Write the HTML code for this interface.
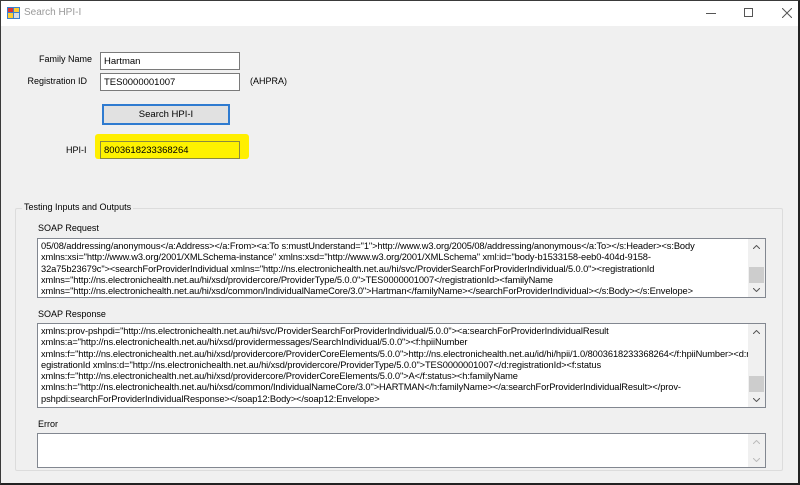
<!DOCTYPE html>
<html><head><meta charset="utf-8"><style>
*{box-sizing:border-box;margin:0;padding:0}
body{width:800px;height:485px;overflow:hidden;background:#f0f0f0;font-family:"Liberation Sans",sans-serif;font-size:9px;color:#000;position:relative}
.frame{position:absolute;inset:0;border:1px solid #3a3a3a;border-right:2px solid #222;border-bottom:2px solid #222}
.title{position:absolute;left:0;top:0;width:800px;height:26px;background:#fff}
.abs{position:absolute;white-space:nowrap}
.r{text-align:right}
.tb{position:absolute;background:#fff;border:1px solid #7a7a7a;height:18px;padding:3px 0 0 3px;font-size:9.5px}
.ta{position:absolute;background:#fff;border:1px solid #828790;font-size:9.3px;line-height:11.3px;padding:2px 0 0 3px;overflow:hidden;letter-spacing:-0.1px}
.ta div{white-space:nowrap}
.sb{position:absolute;right:0;top:0;bottom:0;width:17px;background:#f0f0f0}
.sb .th{position:absolute;left:1px;right:1px;background:#cdcdcd}
.sb svg{position:absolute;left:5px}
</style></head><body>
<div class="title">
 <svg class="abs" style="left:7px;top:7px" width="13" height="12"><rect x="0" y="0" width="13" height="12" fill="#3a7fcf"/><rect x="1" y="1" width="5" height="4" fill="#d33"/><rect x="7" y="1" width="5" height="4" fill="#fc3"/><rect x="1" y="6" width="5" height="5" fill="#fc3"/><rect x="7" y="6" width="5" height="5" fill="#ddd"/></svg>
 <div class="abs" style="left:24px;top:7px;font-size:10px;color:#999">Search HPI-I</div>
 <div class="abs" style="left:706px;top:13px;width:10px;height:1px;background:#555"></div>
 <div class="abs" style="left:744px;top:8px;width:9px;height:9px;border:1px solid #555"></div>
 <svg class="abs" style="left:782px;top:8px" width="10" height="10"><path d="M0 0L10 10M10 0L0 10" stroke="#555" stroke-width="1"/></svg>
</div>
<div class="abs r" style="left:20px;width:72px;top:54px">Family Name</div>
<div class="tb" style="left:100px;top:52px;width:140px">Hartman</div>
<div class="abs r" style="left:10px;width:77px;top:76px">Registration ID</div>
<div class="tb" style="left:100px;top:73px;width:140px">TES0000001007</div>
<div class="abs" style="left:250px;top:76px">(AHPRA)</div>
<div class="abs" style="left:102px;top:104px;width:128px;height:21px;background:#e1e1e1;border:2px solid #2f7bd0;text-align:center;line-height:17px;font-size:9.5px">Search HPI-I</div>
<div class="abs" style="left:95px;top:134px;width:154px;height:25px;background:#ffef00;border-radius:3px"></div>
<div class="abs" style="left:66px;top:145px">HPI-I</div>
<div class="tb" style="left:100px;top:141px;width:140px;background:#fef200;border-color:#8a8a40">8003618233368264</div>
<div class="abs" style="left:15px;top:208px;width:768px;height:263px;border:1px solid #dcdcdc;border-radius:2px"></div>
<div class="abs" style="left:22px;top:202px;background:#f0f0f0;padding:0 2px">Testing Inputs and Outputs</div>
<div class="abs" style="left:38px;top:223px">SOAP Request</div>
<div class="ta" style="left:37px;top:238px;width:729px;height:60px">
<div>05/08/addressing/anonymous&lt;/a:Address&gt;&lt;/a:From&gt;&lt;a:To s:mustUnderstand="1"&gt;http://www.w3.org/2005/08/addressing/anonymous&lt;/a:To&gt;&lt;/s:Header&gt;&lt;s:Body</div>
<div>xmlns:xsi="http://www.w3.org/2001/XMLSchema-instance" xmlns:xsd="http://www.w3.org/2001/XMLSchema" xml:id="body-b1533158-eeb0-404d-9158-</div>
<div>32a75b23679c"&gt;&lt;searchForProviderIndividual xmlns="http://ns.electronichealth.net.au/hi/svc/ProviderSearchForProviderIndividual/5.0.0"&gt;&lt;registrationId</div>
<div>xmlns="http://ns.electronichealth.net.au/hi/xsd/providercore/ProviderType/5.0.0"&gt;TES0000001007&lt;/registrationId&gt;&lt;familyName</div>
<div>xmlns="http://ns.electronichealth.net.au/hi/xsd/common/IndividualNameCore/3.0"&gt;Hartman&lt;/familyName&gt;&lt;/searchForProviderIndividual&gt;&lt;/s:Body&gt;&lt;/s:Envelope&gt;</div>
<div class="sb"><svg style="top:6px" width="7" height="4"><path d="M0 4L3.5 0.5L7 4" fill="none" stroke="#555"/></svg><div class="th" style="top:28px;height:16px"></div><svg style="bottom:5px" width="7" height="4"><path d="M0 0L3.5 3.5L7 0" fill="none" stroke="#555"/></svg></div>
</div>
<div class="abs" style="left:38px;top:309px">SOAP Response</div>
<div class="ta" style="left:37px;top:323px;width:729px;height:85px">
<div>xmlns:prov-pshpdi="http://ns.electronichealth.net.au/hi/svc/ProviderSearchForProviderIndividual/5.0.0"&gt;&lt;a:searchForProviderIndividualResult</div>
<div>xmlns:a="http://ns.electronichealth.net.au/hi/xsd/providermessages/SearchIndividual/5.0.0"&gt;&lt;f:hpiiNumber</div>
<div>xmlns:f="http://ns.electronichealth.net.au/hi/xsd/providercore/ProviderCoreElements/5.0.0"&gt;http://ns.electronichealth.net.au/id/hi/hpii/1.0/8003618233368264&lt;/f:hpiiNumber&gt;&lt;d:r</div>
<div>egistrationId xmlns:d="http://ns.electronichealth.net.au/hi/xsd/providercore/ProviderType/5.0.0"&gt;TES0000001007&lt;/d:registrationId&gt;&lt;f:status</div>
<div>xmlns:f="http://ns.electronichealth.net.au/hi/xsd/providercore/ProviderCoreElements/5.0.0"&gt;A&lt;/f:status&gt;&lt;h:familyName</div>
<div>xmlns:h="http://ns.electronichealth.net.au/hi/xsd/common/IndividualNameCore/3.0"&gt;HARTMAN&lt;/h:familyName&gt;&lt;/a:searchForProviderIndividualResult&gt;&lt;/prov-</div>
<div>pshpdi:searchForProviderIndividualResponse&gt;&lt;/soap12:Body&gt;&lt;/soap12:Envelope&gt;</div>
<div class="sb"><svg style="top:6px" width="7" height="4"><path d="M0 4L3.5 0.5L7 4" fill="none" stroke="#555"/></svg><div class="th" style="top:52px;height:16px"></div><svg style="bottom:5px" width="7" height="4"><path d="M0 0L3.5 3.5L7 0" fill="none" stroke="#555"/></svg></div>
</div>
<div class="abs" style="left:38px;top:419px">Error</div>
<div class="ta" style="left:37px;top:433px;width:729px;height:35px">
<div class="sb"><svg style="top:6px" width="7" height="4"><path d="M0 4L3.5 0.5L7 4" fill="none" stroke="#bbb"/></svg><svg style="bottom:5px" width="7" height="4"><path d="M0 0L3.5 3.5L7 0" fill="none" stroke="#bbb"/></svg></div>
</div>
<div class="frame"></div>
</body></html>
